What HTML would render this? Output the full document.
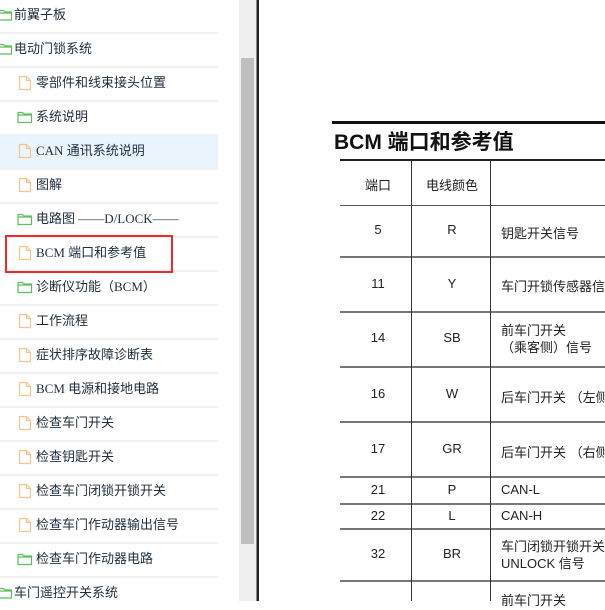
<!DOCTYPE html>
<html><head><meta charset="utf-8"><style>
*{margin:0;padding:0;box-sizing:border-box}
body{width:605px;height:601px;overflow:hidden;background:#fff;position:relative;font-family:"Liberation Serif","Noto Sans CJK SC",serif}
.a{position:absolute}
.it{position:absolute;left:0;width:218px;height:34px;font-size:13px;color:#1f2d3d;line-height:34px;white-space:nowrap}
.sep{position:absolute;left:0;width:218px;height:2px;background:#f2f2f2}
.it svg{position:absolute;top:10px}
.t{position:absolute;font-family:"Liberation Sans","Noto Sans CJK SC",sans-serif;font-size:13px;color:#222;white-space:nowrap}
.h{position:absolute;left:340px;width:265px;background:#555}
.c{width:60px;text-align:center}
.c2{width:70px;text-align:center}
.f{top:9px!important}
</style></head><body>
<div class="a" style="left:0;top:134px;width:218px;height:34px;background:#eaf4fd"></div>
<div class="sep" style="top:32px"></div><div class="sep" style="top:66px"></div><div class="sep" style="top:100px"></div>
<div class="sep" style="top:168px"></div><div class="sep" style="top:202px"></div><div class="sep" style="top:236px"></div><div class="sep" style="top:270px"></div><div class="sep" style="top:304px"></div><div class="sep" style="top:338px"></div><div class="sep" style="top:372px"></div><div class="sep" style="top:406px"></div><div class="sep" style="top:440px"></div><div class="sep" style="top:474px"></div><div class="sep" style="top:508px"></div><div class="sep" style="top:542px"></div><div class="sep" style="top:576px"></div>

<div class="it" style="top:-2px"><svg style="left:-2px" width="15" height="13"><path d="M1 2.5h4.5l1.5 1.5h6.5v8h-12.5z M1 5h12.5" fill="none" stroke="#5cbf5c" stroke-width="1.2"/></svg><span style="position:absolute;left:14px">前翼子板</span></div>
<div class="it" style="top:32px"><svg style="left:-2px" width="15" height="13"><path d="M1 2.5h4.5l1.5 1.5h6.5v8h-12.5z M1 5h12.5" fill="none" stroke="#5cbf5c" stroke-width="1.2"/></svg><span style="position:absolute;left:14px">电动门锁系统</span></div>

<div class="it" style="top:66px"><svg class="f" style="left:18px" width="14" height="16"><path d="M1.5 1.5h7l4 4v9h-11z M8.5 1.5v4h4" fill="none" stroke="#f7c58a" stroke-width="1.2"/></svg><span style="position:absolute;left:36px">零部件和线束接头位置</span></div>
<div class="it" style="top:100px"><svg style="left:17px" width="16" height="14"><path d="M1 2.5h4.5l1.5 1.5h7.5v8.5h-13.5z M1 5h13.5" fill="none" stroke="#5cbf5c" stroke-width="1.2"/></svg><span style="position:absolute;left:36px">系统说明</span></div>
<div class="it" style="top:134px"><svg class="f" style="left:18px" width="14" height="16"><path d="M1.5 1.5h7l4 4v9h-11z M8.5 1.5v4h4" fill="none" stroke="#f7c58a" stroke-width="1.2"/></svg><span style="position:absolute;left:36px">CAN 通讯系统说明</span></div>
<div class="it" style="top:168px"><svg class="f" style="left:18px" width="14" height="16"><path d="M1.5 1.5h7l4 4v9h-11z M8.5 1.5v4h4" fill="none" stroke="#f7c58a" stroke-width="1.2"/></svg><span style="position:absolute;left:36px">图解</span></div>
<div class="it" style="top:202px"><svg style="left:17px" width="16" height="14"><path d="M1 2.5h4.5l1.5 1.5h7.5v8.5h-13.5z M1 5h13.5" fill="none" stroke="#5cbf5c" stroke-width="1.2"/></svg><span style="position:absolute;left:36px">电路图 ——D/LOCK——</span></div>
<div class="it" style="top:236px"><svg class="f" style="left:18px" width="14" height="16"><path d="M1.5 1.5h7l4 4v9h-11z M8.5 1.5v4h4" fill="none" stroke="#f7c58a" stroke-width="1.2"/></svg><span style="position:absolute;left:36px">BCM 端口和参考值</span></div>
<div class="it" style="top:270px"><svg style="left:17px" width="16" height="14"><path d="M1 2.5h4.5l1.5 1.5h7.5v8.5h-13.5z M1 5h13.5" fill="none" stroke="#5cbf5c" stroke-width="1.2"/></svg><span style="position:absolute;left:36px">诊断仪功能（BCM）</span></div>
<div class="it" style="top:304px"><svg class="f" style="left:18px" width="14" height="16"><path d="M1.5 1.5h7l4 4v9h-11z M8.5 1.5v4h4" fill="none" stroke="#f7c58a" stroke-width="1.2"/></svg><span style="position:absolute;left:36px">工作流程</span></div>
<div class="it" style="top:338px"><svg class="f" style="left:18px" width="14" height="16"><path d="M1.5 1.5h7l4 4v9h-11z M8.5 1.5v4h4" fill="none" stroke="#f7c58a" stroke-width="1.2"/></svg><span style="position:absolute;left:36px">症状排序故障诊断表</span></div>
<div class="it" style="top:372px"><svg class="f" style="left:18px" width="14" height="16"><path d="M1.5 1.5h7l4 4v9h-11z M8.5 1.5v4h4" fill="none" stroke="#f7c58a" stroke-width="1.2"/></svg><span style="position:absolute;left:36px">BCM 电源和接地电路</span></div>
<div class="it" style="top:406px"><svg class="f" style="left:18px" width="14" height="16"><path d="M1.5 1.5h7l4 4v9h-11z M8.5 1.5v4h4" fill="none" stroke="#f7c58a" stroke-width="1.2"/></svg><span style="position:absolute;left:36px">检查车门开关</span></div>
<div class="it" style="top:440px"><svg class="f" style="left:18px" width="14" height="16"><path d="M1.5 1.5h7l4 4v9h-11z M8.5 1.5v4h4" fill="none" stroke="#f7c58a" stroke-width="1.2"/></svg><span style="position:absolute;left:36px">检查钥匙开关</span></div>
<div class="it" style="top:474px"><svg class="f" style="left:18px" width="14" height="16"><path d="M1.5 1.5h7l4 4v9h-11z M8.5 1.5v4h4" fill="none" stroke="#f7c58a" stroke-width="1.2"/></svg><span style="position:absolute;left:36px">检查车门闭锁开锁开关</span></div>
<div class="it" style="top:508px"><svg class="f" style="left:18px" width="14" height="16"><path d="M1.5 1.5h7l4 4v9h-11z M8.5 1.5v4h4" fill="none" stroke="#f7c58a" stroke-width="1.2"/></svg><span style="position:absolute;left:36px">检查车门作动器输出信号</span></div>
<div class="it" style="top:542px"><svg style="left:17px" width="16" height="14"><path d="M1 2.5h4.5l1.5 1.5h7.5v8.5h-13.5z M1 5h13.5" fill="none" stroke="#5cbf5c" stroke-width="1.2"/></svg><span style="position:absolute;left:36px">检查车门作动器电路</span></div>
<div class="it" style="top:576px"><svg style="left:-2px" width="15" height="13"><path d="M1 2.5h4.5l1.5 1.5h6.5v8h-12.5z M1 5h12.5" fill="none" stroke="#5cbf5c" stroke-width="1.2"/></svg><span style="position:absolute;left:14px">车门遥控开关系统</span></div>

<div class="a" style="left:5px;top:235px;width:168px;height:38px;border:2px solid #f02a2a"></div>

<div class="a" style="left:239px;top:0;width:17px;height:601px;background:#f0f0f0"></div>
<div class="a" style="left:241px;top:58px;width:13px;height:486px;background:#bfbfbf"></div>
<div class="a" style="left:256px;top:0;width:1px;height:601px;background:#888"></div>
<div class="a" style="left:257px;top:0;width:2px;height:601px;background:#222"></div>

<div class="a" style="left:332px;top:121px;width:273px;height:3px;background:#111"></div>
<div class="t" style="left:334px;top:126px;font-size:21px;font-weight:bold;color:#111">BCM 端口和参考值</div>
<div class="h" style="top:159px;height:2px;background:#222"></div>
<div class="h" style="top:205px;height:1px"></div>
<div class="h" style="top:256px;height:2px;background:#777"></div>
<div class="h" style="top:311px;height:2px;background:#777"></div>
<div class="h" style="top:366px;height:2px;background:#777"></div>
<div class="h" style="top:421px;height:2px;background:#777"></div>
<div class="h" style="top:476px;height:2px;background:#777"></div>
<div class="h" style="top:503px;height:2px;background:#777"></div>
<div class="h" style="top:528px;height:2px;background:#777"></div>
<div class="h" style="top:580px;height:2px;background:#777"></div>
<div class="a" style="left:411px;top:160px;width:1px;height:441px;background:#333"></div>
<div class="a" style="left:490px;top:160px;width:1px;height:441px;background:#333"></div>

<div class="t c" style="left:348px;top:175px">端口</div>
<div class="t c2" style="left:417px;top:175px">电线颜色</div>

<div class="t c" style="left:348px;top:222px">5</div><div class="t c2" style="left:417px;top:222px">R</div><div class="t" style="left:501px;top:223px">钥匙开关信号</div>
<div class="t c" style="left:348px;top:276px">11</div><div class="t c2" style="left:417px;top:276px">Y</div><div class="t" style="left:501px;top:276px">车门开锁传感器信号</div>
<div class="t c" style="left:348px;top:330px">14</div><div class="t c2" style="left:417px;top:330px">SB</div><div class="t" style="left:501px;top:322px;line-height:17px">前车门开关<br>（乘客侧）信号</div>
<div class="t c" style="left:348px;top:386px">16</div><div class="t c2" style="left:417px;top:386px">W</div><div class="t" style="left:501px;top:387px">后车门开关 （左侧）</div>
<div class="t c" style="left:348px;top:441px">17</div><div class="t c2" style="left:417px;top:441px">GR</div><div class="t" style="left:501px;top:442px">后车门开关 （右侧）</div>
<div class="t c" style="left:348px;top:482px">21</div><div class="t c2" style="left:417px;top:482px">P</div><div class="t" style="left:501px;top:482px">CAN-L</div>
<div class="t c" style="left:348px;top:508px">22</div><div class="t c2" style="left:417px;top:508px">L</div><div class="t" style="left:501px;top:508px">CAN-H</div>
<div class="t c" style="left:348px;top:546px">32</div><div class="t c2" style="left:417px;top:546px">BR</div><div class="t" style="left:501px;top:538px;line-height:17px">车门闭锁开锁开关<br>UNLOCK 信号</div>
<div class="t" style="left:501px;top:590px">前车门开关</div>
</body></html>
